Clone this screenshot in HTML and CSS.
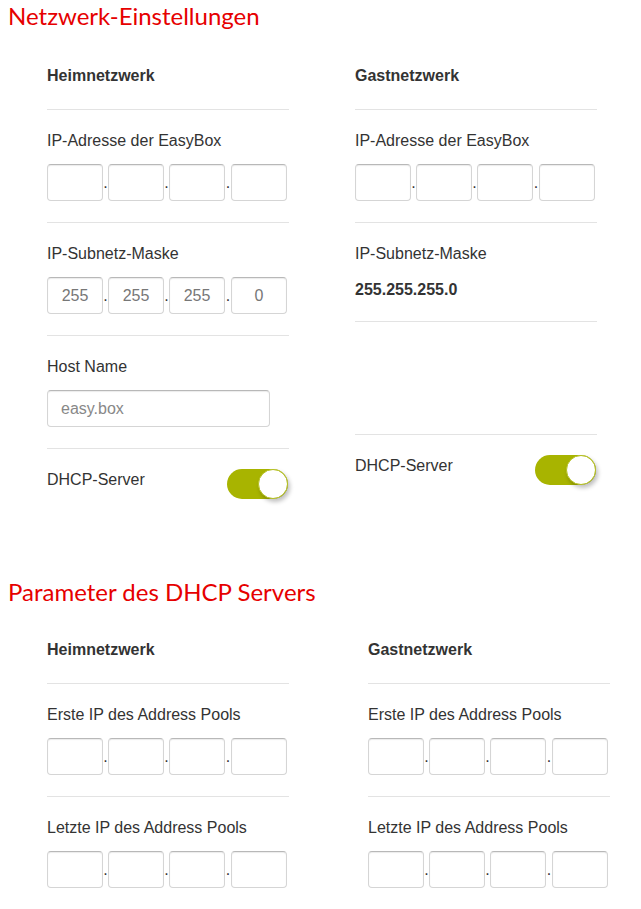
FILE: index.html
```html
<!DOCTYPE html>
<html lang="de">
<head>
    <meta charset="UTF-8">
    <meta name="viewport" content="width=device-width, initial-scale=1.0">
    <title>Netzwerk-Einstellungen</title>
    <link rel="stylesheet" href="styles.css">
</head>
<body>
    <!-- Netzwerk-Einstellungen -->
    <section class="section">
        <h1 class="section-title">Netzwerk-Einstellungen</h1>
        <div class="columns">
            <div class="col">
                <div class="col-head">Heimnetzwerk</div>
                <div class="row">
                    <div class="label">IP-Adresse der EasyBox</div>
                    <div class="ip-group">
                        <input class="ip-box" type="text"><span class="dot">.</span><input class="ip-box" type="text"><span class="dot">.</span><input class="ip-box" type="text"><span class="dot">.</span><input class="ip-box" type="text">
                    </div>
                </div>
                <div class="row">
                    <div class="label">IP-Subnetz-Maske</div>
                    <div class="ip-group">
                        <input class="ip-box" type="text" value="255"><span class="dot">.</span><input class="ip-box" type="text" value="255"><span class="dot">.</span><input class="ip-box" type="text" value="255"><span class="dot">.</span><input class="ip-box" type="text" value="0">
                    </div>
                </div>
                <div class="row">
                    <div class="label">Host Name</div>
                    <input class="text-input" type="text" placeholder="easy.box">
                </div>
                <div class="row row-last">
                    <div class="switch-line">
                        <span class="label">DHCP-Server</span>
                        <span class="toggle"><span class="knob"></span></span>
                    </div>
                </div>
            </div>
            <div class="col">
                <div class="col-head">Gastnetzwerk</div>
                <div class="row">
                    <div class="label">IP-Adresse der EasyBox</div>
                    <div class="ip-group">
                        <input class="ip-box" type="text"><span class="dot">.</span><input class="ip-box" type="text"><span class="dot">.</span><input class="ip-box" type="text"><span class="dot">.</span><input class="ip-box" type="text">
                    </div>
                </div>
                <div class="row">
                    <div class="label">IP-Subnetz-Maske</div>
                    <div class="value">255.255.255.0</div>
                </div>
                <div class="row row-empty"></div>
                <div class="row row-last">
                    <div class="switch-line">
                        <span class="label">DHCP-Server</span>
                        <span class="toggle"><span class="knob"></span></span>
                    </div>
                </div>
            </div>
        </div>
    </section>

    <!-- Parameter des DHCP Servers -->
    <section class="section section-dhcp">
        <h1 class="section-title">Parameter des DHCP Servers</h1>
        <div class="columns columns-wide">
            <div class="col">
                <div class="col-head">Heimnetzwerk</div>
                <div class="row">
                    <div class="label">Erste IP des Address Pools</div>
                    <div class="ip-group">
                        <input class="ip-box" type="text"><span class="dot">.</span><input class="ip-box" type="text"><span class="dot">.</span><input class="ip-box" type="text"><span class="dot">.</span><input class="ip-box" type="text">
                    </div>
                </div>
                <div class="row row-last">
                    <div class="label">Letzte IP des Address Pools</div>
                    <div class="ip-group">
                        <input class="ip-box" type="text"><span class="dot">.</span><input class="ip-box" type="text"><span class="dot">.</span><input class="ip-box" type="text"><span class="dot">.</span><input class="ip-box" type="text">
                    </div>
                </div>
            </div>
            <div class="col">
                <div class="col-head">Gastnetzwerk</div>
                <div class="row">
                    <div class="label">Erste IP des Address Pools</div>
                    <div class="ip-group">
                        <input class="ip-box" type="text"><span class="dot">.</span><input class="ip-box" type="text"><span class="dot">.</span><input class="ip-box" type="text"><span class="dot">.</span><input class="ip-box" type="text">
                    </div>
                </div>
                <div class="row row-last">
                    <div class="label">Letzte IP des Address Pools</div>
                    <div class="ip-group">
                        <input class="ip-box" type="text"><span class="dot">.</span><input class="ip-box" type="text"><span class="dot">.</span><input class="ip-box" type="text"><span class="dot">.</span><input class="ip-box" type="text">
                    </div>
                </div>
            </div>
        </div>
    </section>
</body>
</html>
```

FILE: styles.css
```css
body {
    font-family: "Liberation Sans", Arial, sans-serif;
    font-size: 16px;
    color: #333;
    background-color: #fff;
    margin: 0;
    padding: 0;
}
.section-title {
    margin: 0;
    padding-left: 8px;
    font-family: Lato, "Liberation Sans", sans-serif;
    font-size: 24px;
    font-weight: normal;
    line-height: 32px;
    color: #e60000;
}
.section-dhcp {
    margin-top: 56px;
}
.columns {
    display: flex;
    gap: 66px;
    padding-left: 47px;
}
.columns-wide {
    gap: 79px;
}
.col {
    width: 242px;
}
.col-head {
    font-weight: bold;
    line-height: 20px;
    padding: 34px 0 23px;
    border-bottom: 1px solid #e3e3e3;
}
.section-dhcp .col-head {
    padding-top: 32px;
}
.row {
    padding: 21px 0;
    border-bottom: 1px solid #e3e3e3;
}
.row-last {
    border-bottom: none;
}
.row-empty {
    height: 70px;
}
.label {
    line-height: 20px;
}
.value {
    font-weight: bold;
    line-height: 20px;
    margin-top: 16px;
}
.ip-group {
    display: flex;
    margin-top: 13px;
}
.ip-box, .text-input {
    box-sizing: border-box;
    height: 37px;
    border: 1px solid #d5d5d5;
    border-top-color: #b8b8b8;
    border-radius: 4px;
    box-shadow: inset 0 1px 1px rgba(0,0,0,0.08);
    font-family: "Liberation Sans", Arial, sans-serif;
    font-size: 16px;
    color: #777;
    background: #fff;
    margin: 0;
}
.ip-box {
    width: 56px;
    padding: 0;
    text-align: center;
}
.dot {
    width: 5px;
    line-height: 37px;
    text-align: center;
    color: #333;
}
.dot:nth-of-type(3) {
    width: 6px;
}
.text-input {
    display: block;
    width: 223px;
    margin-top: 13px;
    padding: 0 13px;
}
.text-input::placeholder {
    color: #888;
}
.switch-line {
    display: flex;
    align-items: flex-start;
}
.toggle {
    display: flex;
    justify-content: flex-end;
    margin-left: auto;
    margin-right: 1px;
    margin-top: -1px;
    width: 61px;
    height: 30px;
    border-radius: 15px;
    background-color: #a8b400;
}
.knob {
    box-sizing: border-box;
    width: 30px;
    height: 30px;
    border-radius: 50%;
    background: #fff;
    border: 1px solid #b5c020;
    box-shadow: 2px 3px 4px rgba(0,0,0,0.25);
}
```
